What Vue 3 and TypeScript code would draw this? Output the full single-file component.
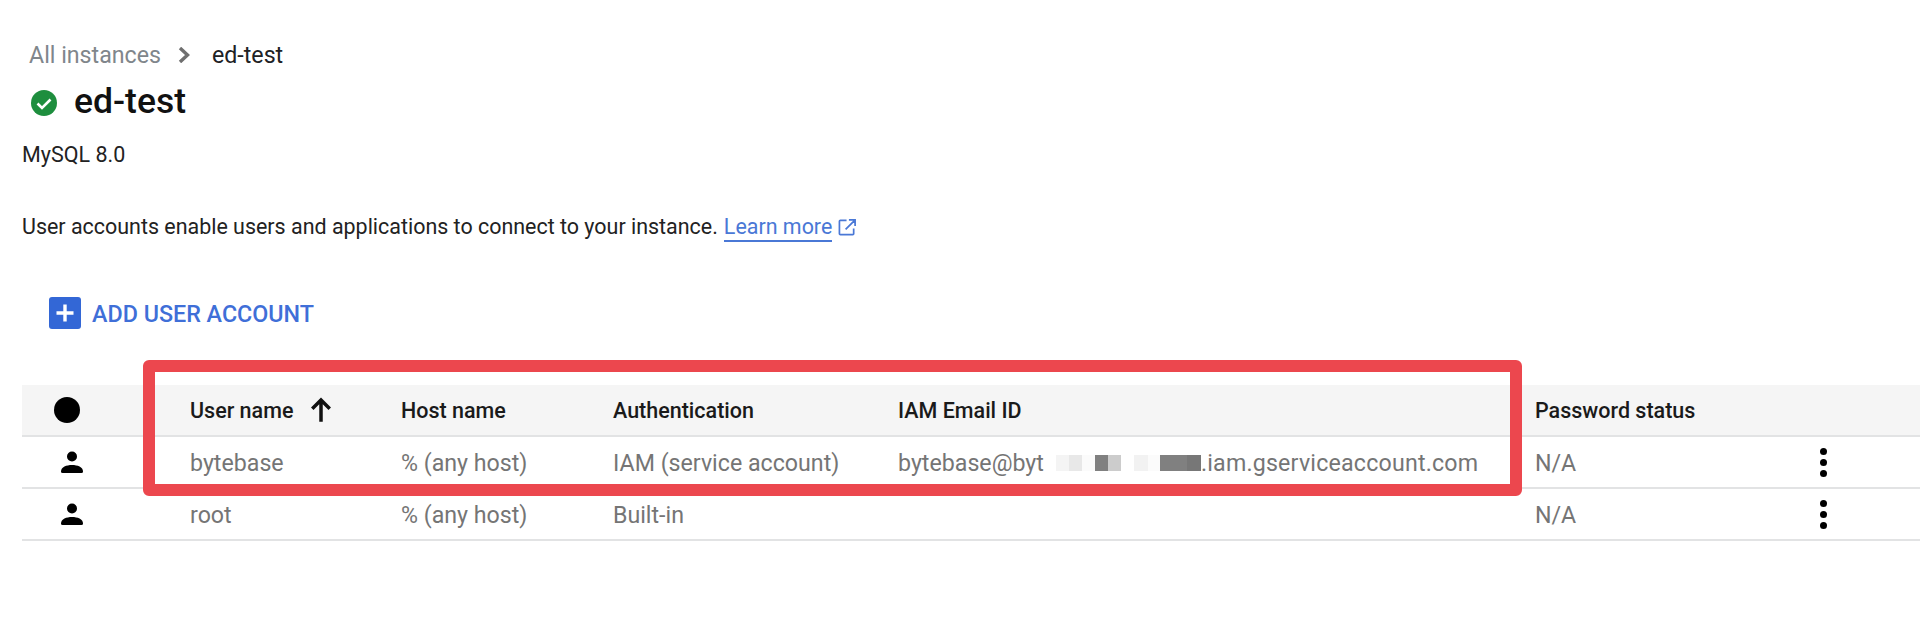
<script setup lang="ts">
interface Row { name: string; auth: string; email: boolean }
const rows: Row[] = [
  { name: 'bytebase', auth: 'IAM (service account)', email: true },
  { name: 'root', auth: 'Built-in', email: false },
]
const blocks = [
  { w: 12, c: '#ffffff' }, { w: 13, c: '#f4f4f4' }, { w: 13, c: '#e8e8e8' }, { w: 13, c: '#fbfbfb' }, { w: 13, c: '#808080' },
  { w: 13, c: '#cccccc' }, { w: 13, c: '#ffffff' }, { w: 14, c: '#f2f2f2' }, { w: 12, c: '#fbfbfb' },
  { w: 27, c: '#808080' }, { w: 14, c: '#777777' },
]
</script>

<template>
  <main class="page">
    <nav class="crumbs">
      <span class="crumb-link">All instances</span>
      <svg class="chev" viewBox="0 0 16 16" width="16" height="16"><path d="M3 1 10.500 8 3 15" fill="none" stroke="#6f6f6f" stroke-width="3.400"/></svg>
      <span class="crumb-cur">ed-test</span>
    </nav>
    <h1 class="title">
      <svg class="ok" viewBox="0 0 26 26" width="26" height="26">
        <circle cx="13" cy="13" r="13" fill="#1e8e3e"/>
        <path d="M6.500 13.500 11 18l8.500-8.500" fill="none" stroke="#fff" stroke-width="2.600"/>
      </svg>
      <span>ed-test</span>
    </h1>
    <p class="version">MySQL 8.0</p>
    <p class="desc">
      <span>User accounts enable users and applications to connect to your instance.</span>
      <a class="learn">Learn more</a>
      <svg class="ext" viewBox="0 0 20 20" width="19" height="19">
        <path d="M9 2.500H2.500a1 1 0 0 0-1 1v13a1 1 0 0 0 1 1h13a1 1 0 0 0 1-1V11M8 12 17 3M11.500 2H18v6.500" fill="none" stroke="#4a78d6" stroke-width="1.800"/>
      </svg>
    </p>
    <div class="add">
      <span class="add-icon">
        <svg viewBox="0 0 32 32" width="32" height="32"><path d="M16 7.500v17M7.500 16h17" stroke="#fff" stroke-width="3.400"/></svg>
      </span>
      <span class="add-label">ADD USER ACCOUNT</span>
    </div>

    <section class="table">
      <div class="row head">
        <div class="c-icon"><span class="dot"></span></div>
        <div class="sort">
          <span>User name</span>
          <svg viewBox="0 0 24 24" width="24" height="24"><path d="M12 22V4M4.500 11 12 3.500 19.500 11" fill="none" stroke="#111" stroke-width="3"/></svg>
        </div>
        <div>Host name</div>
        <div>Authentication</div>
        <div>IAM Email ID</div>
        <div>Password status</div>
        <div></div>
      </div>
      <div v-for="r in rows" :key="r.name" class="row body">
        <div class="c-icon">
          <svg class="person" viewBox="0 0 24 24" width="24" height="24">
            <circle cx="12" cy="6.500" r="5"/>
            <path d="M1 21.500c0-4.500 5.500-6.500 11-6.500s11 2 11 6.500a1.500 1.500 0 0 1-1.500 1.500h-19A1.500 1.500 0 0 1 1 21.500z"/>
          </svg>
        </div>
        <div class="cell">{{ r.name }}</div>
        <div class="cell">% (any host)</div>
        <div class="cell">{{ r.auth }}</div>
        <div class="cell email">
          <template v-if="r.email">
            <span>bytebase@byt</span>
            <span class="redact">
              <i v-for="(b, i) in blocks" :key="i" :style="{ width: b.w + 'px', background: b.c }"></i>
            </span>
            <span class="email-tail">.iam.gserviceaccount.com</span>
          </template>
        </div>
        <div class="cell">N/A</div>
        <div class="more">
          <span></span><span></span><span></span>
        </div>
      </div>
      <div class="highlight"></div>
    </section>
  </main>
</template>

<style>
html, body { background: #fff; }
</style>

<style scoped>
.page {
  height: 619px;
  box-sizing: border-box;
  padding-top: 41px;
  font-family: Roboto, "Liberation Sans", sans-serif;
  overflow: hidden;
  color: #222;
}
.crumbs {
  display: flex;
  align-items: center;
  height: 28px;
  padding-left: 29px;
  font-size: 23.200px;
}
.crumb-link { color: #80868b; }
.chev { margin: 0 19px 0 16px; }
.crumb-cur { color: #202124; }
.title {
  display: flex;
  align-items: center;
  margin: 9px 0 0;
  height: 46px;
  padding-left: 31px;
  font-size: 35.500px;
  font-weight: 500;
  color: #111;
}
.ok { margin: 4px 17px 0 0; }
.version {
  margin: 17px 0 0 22px;
  font-size: 21.500px;
  line-height: 28px;
}
.desc {
  display: flex;
  align-items: center;
  gap: 6px;
  margin: 43px 0 0 22px;
  font-size: 21.450px;
  line-height: 28px;
}
.learn {
  color: #4a78d6;
  border-bottom: 2px solid #4a78d6;
  line-height: 26px;
  margin-top: 2px;
}
.add {
  display: flex;
  align-items: center;
  gap: 11px;
  margin: 55px 0 0 49px;
  color: #3f6fd8;
  font-size: 23.300px;
  font-weight: 500;
  height: 32px;
}
.add-label { padding-top: 1px; }
.add-icon {
  width: 32px;
  height: 32px;
  border-radius: 3px;
  background: #3367d6;
  display: block;
}
.add-icon svg { display: block; }
.table {
  position: relative;
  margin: 56px 0 0 22px;
}
.row {
  display: grid;
  grid-template-columns: 168px 211px 212px 285px 637px 284px 1fr;
  align-items: center;
  border-bottom: 2px solid #e2e3e4;
  font-size: 23.200px;
}
.head {
  height: 52px;
  box-sizing: border-box;
  background: #f5f5f5;
  font-weight: 500;
  font-size: 21.500px;
  color: #1a1a1a;
}
.body {
  height: 52px;
  box-sizing: border-box;
  color: #757575;
}
.cell { padding-top: 1px; }
.c-icon { display: flex; padding-left: 32px; }
.dot {
  width: 26px;
  height: 26px;
  border-radius: 50%;
  background: #000;
}
.person { fill: #000; margin-left: 6px; }
.sort { display: flex; align-items: center; gap: 14px; }
.sort svg { width: 28px; height: 28px; }
.email { display: flex; align-items: center; white-space: nowrap; }
.email-tail { letter-spacing: 0.200px; }
.redact { display: flex; height: 16px; }
.redact i { display: block; height: 100%; }
.more {
  display: flex;
  flex-direction: column;
  align-items: center;
  gap: 4px;
  width: 8px;
}
.more span {
  width: 7px;
  height: 7px;
  border-radius: 50%;
  background: #000;
}
.highlight {
  position: absolute;
  left: 121px;
  top: -25px;
  width: 1379px;
  height: 136px;
  box-sizing: border-box;
  border: 12px solid #ec474e;
  border-radius: 6px;
  pointer-events: none;
}
</style>
